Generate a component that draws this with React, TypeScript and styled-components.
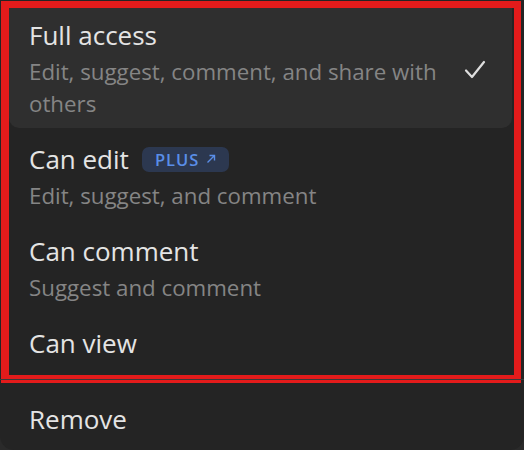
import React from "react";
import styled, { createGlobalStyle } from "styled-components";

const Global = createGlobalStyle`
  html, body {
    margin: 0;
    padding: 0;
    background: #2a2a2a;
  }
  body {
    font-family: "Open Sans", "Noto Sans", Roboto, sans-serif;
    -webkit-font-smoothing: antialiased;
  }
`;

const Panel = styled.div`
  width: 524px;
  height: 450px;
  box-sizing: border-box;
  background: #242424;
  border-radius: 0 0 14px 14px;
  overflow: hidden;
  padding-top: 1px;
  display: flex;
  flex-direction: column;
`;

const Highlight = styled.div`
  margin: 0 3px 0 1px;
  border: 7px solid #e31b1b;
  border-left-width: 8px;
  border-bottom-width: 8px;
  padding: 0 2px 8px 0;
  display: flex;
  flex-direction: column;
  gap: 4px;
`;

const Item = styled.div<{ $active?: boolean }>`
  display: flex;
  align-items: center;
  padding: 11px 26px 8px 20px;
  border-radius: 0 0 10px 10px;
  background: ${(p) => (p.$active ? "#2f2f2f" : "transparent")};
`;

const Texts = styled.div`
  flex: 1;
  display: flex;
  flex-direction: column;
  gap: 5px;
`;

const TitleRow = styled.div`
  display: flex;
  align-items: center;
  gap: 13px;
`;

const Title = styled.span`
  font-size: 26px;
  line-height: 32px;
  color: #e4e4e4;
`;

const Sub = styled.div`
  font-size: 22.3px;
  line-height: 32px;
  color: #858585;
  max-width: 425px;
`;

const Badge = styled.span`
  display: inline-flex;
  align-items: center;
  gap: 7px;
  height: 25px;
  padding: 0 13px;
  border-radius: 7px;
  background: #2c3850;
  color: #5a8ee8;
  font-size: 16.5px;
  font-weight: 600;
  letter-spacing: 1px;
`;

const Check = styled.svg`
  width: 22px;
  height: 22px;
  flex: none;
`;

const Divider = styled.div`
  height: 1px;
  background: #3a3a3a;
  margin-top: -4px;
`;

const RemoveItem = styled.div`
  padding: 23px 0 0 29px;
`;

type Row = { title: string; sub?: string; active?: boolean; plus?: boolean };

const rows: Row[] = [
  { title: "Full access", sub: "Edit, suggest, comment, and share with others", active: true },
  { title: "Can edit", sub: "Edit, suggest, and comment", plus: true },
  { title: "Can comment", sub: "Suggest and comment" },
  { title: "Can view" },
];

export default function App() {
  return (
    <>
      <Global />
      <Panel>
        <Highlight>
          {rows.map((r) => (
            <Item key={r.title} $active={r.active}>
              <Texts>
                <TitleRow>
                  <Title>{r.title}</Title>
                  {r.plus && (
                    <Badge>
                      PLUS
                      <svg width="10" height="10" viewBox="0 0 10 10">
                        <path d="M1.5 8.5 L8.5 1.5 M3.5 1.5 H8.5 V6.5" stroke="#5a8ee8" strokeWidth="1.4" fill="none" />
                      </svg>
                    </Badge>
                  )}
                </TitleRow>
                {r.sub && <Sub>{r.sub}</Sub>}
              </Texts>
              {r.active && (
                <Check viewBox="0 0 22 22">
                  <path d="M2 11.5 L8 18 L20 3" stroke="#dedede" strokeWidth="2.2" fill="none" strokeLinecap="round" strokeLinejoin="round" />
                </Check>
              )}
            </Item>
          ))}
        </Highlight>
        <Divider />
        <RemoveItem>
          <Title>Remove</Title>
        </RemoveItem>
      </Panel>
    </>
  );
}
